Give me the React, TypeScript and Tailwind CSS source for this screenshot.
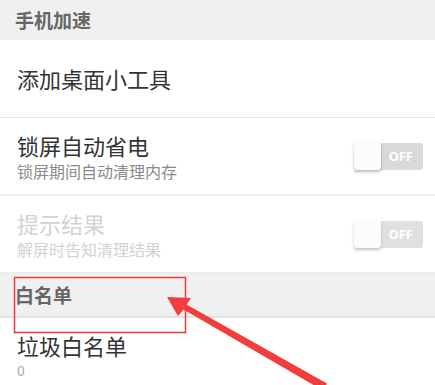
import React from "react";

const cjk = { fontFamily: '"Noto Sans CJK SC", "Noto Sans", sans-serif' };

function Toggle({ dim }: { dim?: boolean }) {
    return (
        <div className={"relative w-[69px] h-[27px] rounded-[3px] bg-[#d9d9d9] " + (dim ? "opacity-80" : "")}>
            <span className="absolute right-[10px] top-0 h-[27px] leading-[27px] text-[13px] font-bold text-white"
                style={{ fontFamily: '"Open Sans", sans-serif' }}>
                OFF
            </span>
            <div className="absolute left-0 -top-px w-[27px] h-[28px] rounded-[3px] bg-[#fcfcfc] shadow-[0_2px_3px_rgba(0,0,0,0.28)]" />
        </div>
    );
}

function SectionHeader({ label, className }: { label: string; className: string }) {
    return (
        <div className={"flex items-center px-[15px] bg-[#f0f0f0] " + className}>
            <span className="text-[19px] font-bold text-[#666]">{label}</span>
        </div>
    );
}

function SwitchRow({ title, sub, disabled }: { title: string; sub: string; disabled?: boolean }) {
    return (
        <div className="flex items-center justify-between pl-[17px] pr-[12px] h-[78px] border-b-2 border-[#ececec]">
            <div className="flex flex-col">
                <span className={"text-[22px] leading-[30px] " + (disabled ? "text-[#d2d2d2]" : "text-[#333]")}>{title}</span>
                <span className={"text-[16px] leading-[22px] " + (disabled ? "text-[#d2d2d2]" : "text-[#8a8a8a]")}>{sub}</span>
            </div>
            <Toggle dim={disabled} />
        </div>
    );
}

export default function App() {
    return (
        <div className="relative w-[435px] h-[385px] overflow-hidden bg-white" style={cjk}>
            <SectionHeader label="手机加速" className="h-[40px]" />
            <div className="flex items-center pl-[17px] h-[78px] border-b border-[#e8e8e8]">
                <span className="text-[22px] text-[#333]">添加桌面小工具</span>
            </div>
            <SwitchRow title="锁屏自动省电" sub="锁屏期间自动清理内存" />
            <SwitchRow title="提示结果" sub="解屏时告知清理结果" disabled />
            <SectionHeader label="白名单" className="h-[44px] border-b-2 border-[#e3e3e3]" />
            <div className="flex flex-col pl-[17px] pt-[12px]">
                <span className="text-[22px] leading-[30px] text-[#333]">垃圾白名单</span>
                <span className="text-[14px] leading-[20px] text-[#aaa]">0</span>
            </div>

            <svg className="absolute inset-0 pointer-events-none" width="435" height="385" viewBox="0 0 435 385">
                <rect x="14.5" y="277.5" width="171" height="55" fill="none" stroke="#ee3b3b" strokeWidth="1.5" />
                <polygon
                    fill="#f23d3d"
                    points="167,297 191,298 186.5,304.4 327,383.5 323,390.5 183.5,309.6 178,316"
                />
            </svg>
        </div>
    );
}
